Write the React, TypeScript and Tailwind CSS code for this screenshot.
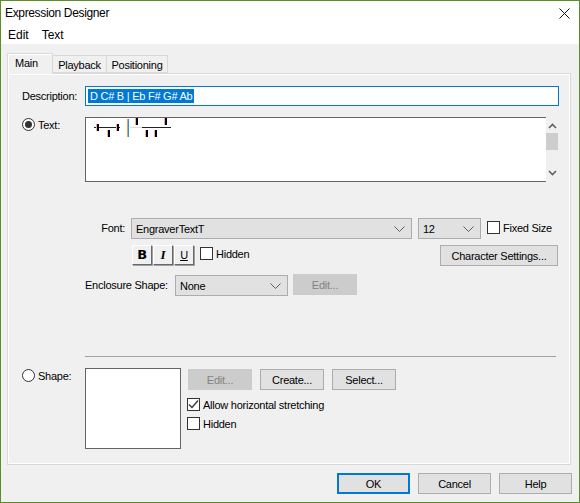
import type { ReactNode } from 'react';

const ticks = [
  { x: 10, y: 6, h: 7 },
  { x: 21, y: 12, h: 7 },
  { x: 30, y: 6, h: 7 },
  { x: 49, y: 0, h: 7 },
  { x: 59, y: 12, h: 7 },
  { x: 68, y: 12, h: 7 },
  { x: 78, y: 0, h: 7 },
];

function Btn({ className, disabled, children }: { className: string; disabled?: boolean; children: ReactNode }) {
  return (
    <div
      className={
        'flex items-center justify-center border h-[21px] pt-[1px] ' +
        (disabled ? 'bg-[#cccccc] border-[#cccccc] text-[#838383] ' : 'bg-[#e1e1e1] border-[#adadad] ') +
        className
      }
    >
      {children}
    </div>
  );
}

function Select({ className, value }: { className: string; value: string }) {
  return (
    <div className={'flex items-center justify-between bg-[#e1e1e1] border border-[#adadad] h-[21px] pl-[4px] pr-[6px] ' + className}>
      <span className="pt-[1px]">{value}</span>
      <svg width="11" height="6" viewBox="0 0 11 6" fill="none" stroke="#606060">
        <path d="M0.5 0.5L5.5 5.5L10.5 0.5" />
      </svg>
    </div>
  );
}

function Check({ label, checked, className }: { label: string; checked?: boolean; className?: string }) {
  return (
    <div className={'flex items-center h-[13px] ' + (className ?? '')}>
      <div className="w-[13px] h-[13px] bg-white border border-[#333333] flex items-center justify-center">
        {checked && (
          <svg width="11" height="11" viewBox="0 0 11 11" fill="none" stroke="#333333" strokeWidth="1.3">
            <path d="M1 5.5L4 8.5L10 1.5" />
          </svg>
        )}
      </div>
      <span className="ml-[3px]">{label}</span>
    </div>
  );
}

function Radio({ label, checked }: { label: string; checked?: boolean }) {
  return (
    <div className="flex items-center w-[63px] h-[13px]">
      <div className="w-[13px] h-[13px] rounded-full bg-white border border-[#333333] flex items-center justify-center">
        {checked && <div className="w-[7px] h-[7px] rounded-full bg-[#333333]" />}
      </div>
      <span className="ml-[3px]">{label}</span>
    </div>
  );
}

function StyleBtn({ children }: { children: ReactNode }) {
  return (
    <div className="w-[20px] h-[20px] flex items-center justify-center bg-[#f0f0f0] border border-t-white border-l-white border-r-[#696969] border-b-[#696969] shadow-[1px_1px_0_#a0a0a0]">
      {children}
    </div>
  );
}

export default function App() {
  return (
    <div className="w-[580px] h-[503px] flex flex-col bg-[#f0f0f0] border border-[#5a8f22] text-[11px] leading-[16px] tracking-[-0.25px] text-black font-['Liberation_Sans',sans-serif] overflow-hidden">
      <div className="h-[25px] bg-white flex items-center justify-between pl-[4px] pr-[9px] text-[12px] tracking-[-0.35px]">
        <span className="-mt-[1px]">Expression Designer</span>
        <svg width="11" height="11" viewBox="0 0 11 11" stroke="#111111" fill="none">
          <path d="M0.5 0.5L10.5 10.5M10.5 0.5L0.5 10.5" />
        </svg>
      </div>
      <div className="h-[18px] bg-white flex items-center pl-[7px] gap-[13px] text-[12px] tracking-normal">
        <span>Edit</span>
        <span>Text</span>
      </div>

      <div className="flex-1 pt-[9px] px-[6px]">
        <div className="flex items-end h-[20px] relative z-10">
          <div className="w-[46px] h-[21px] -mb-[1px] bg-[#f0f0f0] border border-[#d9d9d9] border-b-0 shadow-[inset_1px_1px_0_white] flex items-center pl-[7px] pb-[2px]">Main</div>
          <div className="w-[54px] h-[18px] border border-l-0 border-[#d9d9d9] flex items-center justify-center pt-[1px]">Playback</div>
          <div className="w-[61px] h-[18px] border border-l-0 border-[#d9d9d9] flex items-center justify-center pt-[1px]">Positioning</div>
        </div>

        <div className="w-[564px] h-[392px] border border-[#d9d9d9]">
          <div className="h-full border border-white pl-[13px] pt-[11px]">
            <div className="flex h-[20px] items-center">
              <span className="w-[63px] pr-[8px] text-right whitespace-nowrap">Description:</span>
              <div className="w-[474px] h-[20px] bg-white border border-[#0078d7] flex items-center pl-[2px]">
                <span className="bg-[#0078d7] text-white h-[14px] leading-[14px] px-[2px]">D C# B | Eb F# G# Ab</span>
              </div>
            </div>

            <div className="flex mt-[11px]">
              <div className="pt-[1px]">
                <Radio label="Text:" checked />
              </div>
              <div className="w-[474px] h-[65px] flex">
                <div className="w-[461px] bg-white border-l border-y border-[#646464]">
                  <svg width="90" height="22" viewBox="0 0 90 22" className="block">
                    <rect x="8" y="9" width="26" height="1" fill="#222222" />
                    <rect x="44" y="9" width="12" height="1" fill="#d8dde0" />
                    <rect x="56" y="9" width="29" height="1" fill="#222222" />
                    {ticks.map((t) => (
                      <g key={t.x}>
                        <rect x={t.x} y={t.y} width="1" height={t.h} fill="#f2b36e" />
                        <rect x={t.x + 1} y={t.y} width="2" height={t.h} fill="#000033" />
                      </g>
                    ))}
                    <rect x="41" y="1" width="1" height="18" fill="#e8a25a" />
                    <rect x="42" y="1" width="1" height="18" fill="#2f8fdc" />
                  </svg>
                </div>
                <div className="w-[13px] flex flex-col items-center justify-between py-[6px] relative">
                  <svg width="9" height="6" viewBox="0 0 9 6" fill="none" stroke="#606060" strokeWidth="1.6">
                    <path d="M1 5L4.5 1.5L8 5" />
                  </svg>
                  <div className="absolute top-[16px] left-0 w-[12px] h-[17px] bg-[#cdcdcd]" />
                  <svg width="9" height="6" viewBox="0 0 9 6" fill="none" stroke="#606060" strokeWidth="1.6">
                    <path d="M1 1L4.5 4.5L8 1" />
                  </svg>
                </div>
              </div>
            </div>

            <div className="flex items-center mt-[36px] h-[21px]">
              <span className="w-[109px] pr-[6px] text-right -mt-[2px]">Font:</span>
              <Select className="w-[281px]" value="EngraverTextT" />
              <Select className="w-[63px] ml-[6px]" value="12" />
              <Check className="ml-[6px] -mt-[2px]" label="Fixed Size" />
            </div>

            <div className="flex items-start mt-[6px] ml-[110px]">
              <div className="flex gap-[1px]">
                <StyleBtn><span className="font-bold text-[13px] font-['DejaVu_Sans',sans-serif]">B</span></StyleBtn>
                <StyleBtn><span className="italic font-bold text-[13px] font-['Liberation_Serif',serif]">I</span></StyleBtn>
                <StyleBtn><span className="underline">U</span></StyleBtn>
              </div>
              <Check className="ml-[6px] mt-[2px]" label="Hidden" />
              <Btn className="w-[118px] ml-auto mr-[11px]">Character Settings...</Btn>
            </div>

            <div className="flex items-center mt-[9px] ml-[63px]">
              <span className="w-[90px] whitespace-nowrap -mt-[2px]">Enclosure Shape:</span>
              <Select className="w-[113px]" value="None" />
              <Btn disabled className="w-[64px] ml-[5px] -mt-[2px]">Edit...</Btn>
            </div>

            <div className="h-[1px] w-[471px] ml-[63px] mt-[60px] bg-[#a0a0a0]" />

            <div className="flex mt-[11px]">
              <div className="pt-[1px]">
                <Radio label="Shape:" />
              </div>
              <div className="w-[96px] h-[81px] bg-white border border-[#646464]" />
              <div className="ml-[7px] pt-[1px]">
                <div className="flex">
                  <Btn disabled className="w-[64px]">Edit...</Btn>
                  <Btn className="w-[64px] ml-[8px]">Create...</Btn>
                  <Btn className="w-[64px] ml-[8px]">Select...</Btn>
                </div>
                <Check className="mt-[8px] -ml-[1px]" label="Allow horizontal stretching" checked />
                <Check className="mt-[6px] -ml-[1px]" label="Hidden" />
              </div>
            </div>
          </div>
        </div>

        <div className="flex justify-end gap-[8px] mt-[8px] pr-[1px]">
          <div className="w-[73px] h-[21px] flex items-center justify-center bg-[#e1e1e1] border-2 border-[#0078d7] pt-[1px]">OK</div>
          <Btn className="w-[73px]">Cancel</Btn>
          <Btn className="w-[73px]">Help</Btn>
        </div>
      </div>
    </div>
  );
}
